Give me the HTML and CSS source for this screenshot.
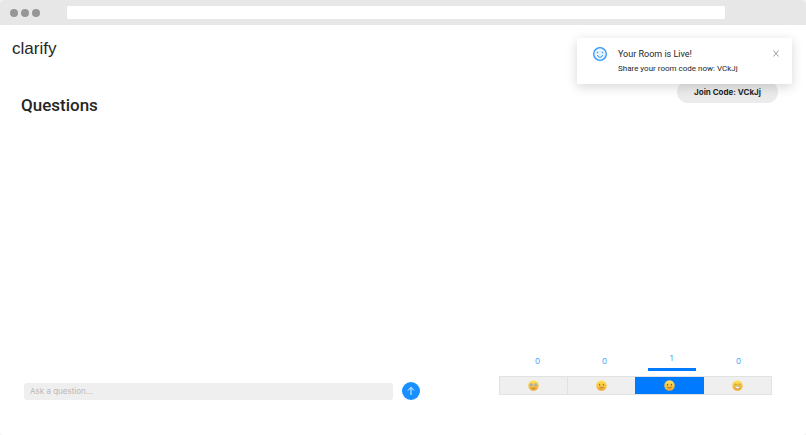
FILE: index.html
```
<!DOCTYPE html>
<html lang="en">
<head>
    <meta charset="UTF-8">
    <meta name="viewport" content="width=device-width, initial-scale=1">
    <title>clarify</title>
    <link rel="stylesheet" href="styles.css">
</head>
<body>
<div class="window">
    <div class="titlebar">
        <div class="dots"><span></span><span></span><span></span></div>
        <input class="address" type="text" aria-label="Address">
    </div>

    <header class="header">
        <a class="logo" href="#">clarify</a>
    </header>

    <main class="main">
        <h1>Questions</h1>
        <button class="join" type="button">Join Code: VCkJj</button>
    </main>

    <footer class="footer">
        <form class="ask">
            <input type="text" placeholder="Ask a question..." aria-label="Ask a question">
            <button type="button" aria-label="Send">
                <svg width="10" height="10" viewBox="0 0 10 10"><path d="M5 9V1.4M2 4.5l3-3.1 3 3.1" fill="none" stroke="#fff" stroke-width="0.9"/></svg>
            </button>
        </form>

        <div class="poll">
            <div class="counts">
                <div class="count">0</div>
                <div class="count">0</div>
                <div class="count voted">1</div>
                <div class="count">0</div>
            </div>
            <div class="reactions">
                <button type="button" aria-label="Amazed">
                    <svg viewBox="0 0 20 20"><circle cx="10" cy="10" r="9.5" fill="url(#face)"/><path d="M6 13.500q4 1 8 0-1 3.500-4 3.500t-4-3.500z" fill="#c98a3c"/><circle cx="6" cy="9" r="3" fill="#b3b09a"/><circle cx="14" cy="9" r="3" fill="#b3b09a"/></svg>
                </button>
                <button type="button" aria-label="Unsure">
                    <svg viewBox="0 0 20 20"><circle cx="10" cy="10" r="9.5" fill="url(#face)"/><ellipse cx="6.500" cy="8.500" rx="1.200" ry="1.600" fill="#9a7130"/><ellipse cx="13.500" cy="8.500" rx="1.200" ry="1.600" fill="#9a7130"/><path d="M6.500 14.200l7-.5" stroke="#9a7130" stroke-width="1.300"/></svg>
                </button>
                <button class="selected" type="button" aria-label="Okay">
                    <svg viewBox="0 0 20 20"><circle cx="10" cy="10" r="9.5" fill="url(#face)"/><ellipse cx="6.500" cy="8.500" rx="1.200" ry="1.600" fill="#85602a"/><ellipse cx="13.500" cy="8.500" rx="1.200" ry="1.600" fill="#85602a"/><path d="M6 13.200q4 2.600 8 0" fill="none" stroke="#85602a" stroke-width="1.300"/></svg>
                </button>
                <button type="button" aria-label="Great">
                    <svg viewBox="0 0 20 20"><circle cx="10" cy="10" r="9.5" fill="url(#face)"/><path d="M5 8.500q1.500-3 3 0M12 8.500q1.500-3 3 0" fill="none" stroke="#85602a" stroke-width="1.300"/><path d="M5 11.500h10q-.5 4.500-5 4.500t-5-4.500z" fill="#fff" stroke="#a98b55" stroke-width="1"/></svg>
                </button>
            </div>
        </div>
    </footer>

    <div class="notice" role="status">
        <svg class="smile" viewBox="0 0 14 14" fill="none" stroke="#2f93f5"><circle cx="7" cy="7" r="6.300" fill="#e6f4ff" stroke-width="1.300"/><path d="M4.300 8q.4 2.300 2.700 2.300T9.700 8" stroke-width="0.900"/><circle cx="4.600" cy="5.500" r=".4"/><circle cx="9.400" cy="5.500" r=".4"/></svg>
        <div class="notice-text">
            <h2>Your Room is Live!</h2>
            <p>Share your room code now: VCkJj</p>
        </div>
        <button class="close" type="button" aria-label="Close">
            <svg width="6" height="7" viewBox="0 0 6 7"><path d="M.5.5l5 6M5.500.5l-5 6" stroke="#858585" stroke-width="0.800"/></svg>
        </button>
    </div>
</div>

<svg class="defs" width="0" height="0" aria-hidden="true">
    <linearGradient id="face" x1="0" y1="0" x2="0" y2="1"><stop offset="0" stop-color="#ffe65c"/><stop offset="1" stop-color="#f1a52c"/></linearGradient>
</svg>
</body>
</html>
```
FILE: styles.css
```
* { box-sizing: border-box; }
body { margin: 0; background: #f4f4f4; color: #262626; font-family: Inter, "Liberation Sans", sans-serif; font-size: 8px; }
button { padding: 0; border: none; font-family: inherit; cursor: pointer; }
h1, h2, p { margin: 0; }
svg { display: block; }
.defs { position: absolute; }

.window { position: relative; display: flex; flex-direction: column; min-height: 100vh; background: #fff; border-radius: 4px; overflow: hidden; }

.titlebar { display: flex; align-items: center; height: 25px; padding: 0 10% 0 10px; background: #e7e7e7; }
.dots { display: flex; gap: 3px; margin-right: 27px; }
.dots span { width: 8px; height: 8px; border-radius: 50%; background: #969696; }
.address { flex: 1; min-width: 0; height: 13px; padding: 0 4px; border: none; border-radius: 1px; background: #fff; }

.header { padding: 14px 12px 0; }
.logo { color: #262626; font-family: "Liberation Sans", Arial, sans-serif; font-size: 17px; line-height: 20px; text-decoration: none; }

.main { flex: 1; display: flex; justify-content: space-between; align-items: flex-start; padding: 22px 28px 0 21px; }
h1 { margin-top: 14px; font-family: Roboto, sans-serif; font-size: 17px; line-height: 20px; font-weight: 500; }
.join { width: 101px; height: 22px; border-radius: 11px; background: #ebebeb; color: #262626; font-size: 8px; font-weight: 700; }

.footer { display: flex; align-items: flex-end; justify-content: space-between; padding: 0 34px 40px 24px; }
.ask { display: flex; align-items: center; gap: 9px; width: 53%; margin-bottom: -5px; }
.ask input { flex: 1; min-width: 0; height: 17px; padding: 0 6px; border: none; border-radius: 3px; background: #efefef; font-family: inherit; font-size: 8px; }
.ask input::placeholder { color: #b8b8b8; opacity: 1; }
.ask button { display: flex; align-items: center; justify-content: center; width: 18px; height: 18px; border-radius: 50%; background: #1890ff; }

.poll { width: 273px; }
.counts { display: flex; align-items: flex-end; height: 20px; margin: 0 0 5px 5px; }
.count { flex: 1; padding-bottom: 4px; color: #48a5f8; line-height: 12px; text-align: center; }
.voted { padding-bottom: 0; }
.voted::after { content: ""; display: block; width: 48px; height: 3px; margin: 4px auto 0; background: #007bff; }
.reactions { display: flex; border: 1px solid #e2e2e2; }
.reactions button { display: flex; align-items: center; justify-content: center; flex: 1; height: 17px; background: #efefef; }
.reactions button + button { border-left: 1px solid #e2e2e2; }
.reactions .selected, .reactions .selected + button { border-left-color: #007bff; }
.reactions .selected { background: #007bff; }
.reactions svg { width: 11px; height: 11px; }

.notice { position: absolute; top: 38px; right: 14px; display: flex; align-items: flex-start; width: 215px; padding: 9px 13px 9px 16px; border-radius: 1px; background: #fff; box-shadow: 0 3px 12px rgba(0,0,0,0.16); font-family: Roboto, sans-serif; }
.smile { width: 14px; height: 14px; margin-right: 11px; }
.notice-text { flex: 1; }
.notice h2 { font-size: 9px; line-height: 14px; font-weight: 400; }
.notice p { margin-top: 2px; font-size: 8px; line-height: 12px; }
.close { margin-top: 3px; background: none; }
```
